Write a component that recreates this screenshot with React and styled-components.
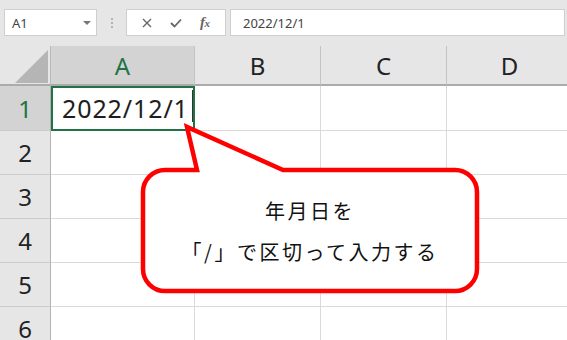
import React from "react";
import styled, { createGlobalStyle, css } from "styled-components";

const Global = createGlobalStyle`
  html, body { margin: 0; padding: 0; background: #ffffff; overflow: hidden; }
  * { box-sizing: border-box; }
`;

const Page = styled.div`
  position: relative;
  width: 567px;
  height: 340px;
  overflow: hidden;
  background: #ffffff;
  font-family: "Noto Sans", "Noto Sans CJK JP", sans-serif;
`;

const Toolbar = styled.div`
  display: flex;
  align-items: center;
  height: 46px;
  padding: 0 2px 1px 4px;
  background: #e6e6e6;
`;

const NameBox = styled.div`
  display: flex;
  align-items: center;
  justify-content: space-between;
  width: 93px;
  height: 27px;
  padding: 0 5px 0 7px;
  background: #ffffff;
  border: 1px solid #cfcfcf;
  font-size: 13px;
  color: #444;
`;

const Caret = styled.span`
  width: 0;
  height: 0;
  border-left: 4px solid transparent;
  border-right: 4px solid transparent;
  border-top: 4px solid #777;
`;

const Grip = styled.div`
  display: flex;
  flex-direction: column;
  align-items: center;
  justify-content: center;
  gap: 2px;
  width: 29px;
  height: 27px;
`;

const Dot = styled.span`
  width: 2px;
  height: 2px;
  background: #b3b3b3;
`;

const ButtonGroup = styled.div`
  display: flex;
  align-items: center;
  justify-content: space-around;
  width: 100px;
  height: 27px;
  padding: 0 6px;
  background: #ffffff;
  border: 1px solid #cfcfcf;
  color: #666;
`;

const IconButton = styled.span`
  display: flex;
  align-items: center;
  justify-content: center;
  width: 22px;
  height: 22px;
`;

const Fx = styled.span`
  font-family: "Liberation Serif", serif;
  font-style: italic;
  font-weight: bold;
  font-size: 15px;
  color: #666;
  letter-spacing: -0.5px;
  & > small { font-size: 11px; }
`;

const FormulaBox = styled.div`
  flex: 1;
  display: flex;
  align-items: center;
  height: 27px;
  margin-left: 4px;
  padding-left: 12px;
  background: #ffffff;
  border: 1px solid #cfcfcf;
  font-size: 13px;
  color: #444;
`;

const Sheet = styled.div`
  display: grid;
  grid-template-columns: 51px 144px 126px 126px 126px;
  grid-template-rows: 40px 45px repeat(5, 44px);
`;

const Corner = styled.div`
  position: relative;
  background: #e6e6e6;
  border-right: 1px solid #b9b9b9;
  border-bottom: 2px solid #ababab;
`;

const ColHeader = styled.div`
  display: flex;
  align-items: center;
  justify-content: center;
  padding-top: 1px;
  background: ${(p) => (p.$selected ? "#d3d3d3" : "#e6e6e6")};
  border-right: 1px solid #c4c4c4;
  border-bottom: 2px solid #ababab;
  font-size: 24px;
  color: ${(p) => (p.$selected ? "#217346" : "#222")};
`;

const RowHeader = styled.div`
  display: flex;
  align-items: center;
  justify-content: center;
  background: ${(p) => (p.$selected ? "#d3d3d3" : "#e6e6e6")};
  border-right: 1px solid #b3b3b3;
  border-bottom: 1px solid #cbcbcb;
  font-size: 24px;
  color: ${(p) => (p.$selected ? "#217346" : "#222")};
`;

const Cell = styled.div`
  display: flex;
  align-items: center;
  border-right: 1px solid #dadada;
  border-bottom: 1px solid #dadada;
  background: #ffffff;
  ${(p) =>
    p.$active &&
    css`
      padding-left: 11px;
      outline: 2px solid #217346;
      outline-offset: -2px;
      font-size: 25px;
      letter-spacing: 0.9px;
      color: #1e1e1e;
    `}
`;

const TextCursor = styled.span`
  width: 1px;
  height: 32px;
  margin-left: 3px;
  margin-top: -4px;
  background: #333;
`;

const CalloutLayer = styled.svg`
  position: absolute;
  left: 0;
  top: 0;
  width: 567px;
  height: 340px;
  pointer-events: none;
`;

const CalloutText = styled.div`
  position: absolute;
  left: 143px;
  top: 170px;
  width: 334px;
  height: 121px;
  display: flex;
  flex-direction: column;
  align-items: center;
  justify-content: center;
  font-family: "Noto Sans CJK JP", sans-serif;
  font-size: 20px;
  line-height: 41px;
  letter-spacing: 2.5px;
  color: #111;
`;

const Line = styled.div`
  white-space: nowrap;
`;

const columns = ["A", "B", "C", "D"];
const rows = [1, 2, 3, 4, 5, 6];

export default function App() {
  return (
    <Page>
      <Global />
      <Toolbar>
        <NameBox>
          <span>A1</span>
          <Caret />
        </NameBox>
        <Grip>
          <Dot />
          <Dot />
          <Dot />
        </Grip>
        <ButtonGroup>
          <IconButton>
            <svg width="10" height="10" viewBox="0 0 10 10">
              <path d="M1 1 L9 9 M9 1 L1 9" stroke="#666" strokeWidth="1.4" fill="none" />
            </svg>
          </IconButton>
          <IconButton>
            <svg width="12" height="10" viewBox="0 0 12 10">
              <path d="M1 5 L4.5 8.5 L11 1.5" stroke="#666" strokeWidth="1.8" fill="none" />
            </svg>
          </IconButton>
          <IconButton>
            <Fx>
              f<small>x</small>
            </Fx>
          </IconButton>
        </ButtonGroup>
        <FormulaBox>2022/12/1</FormulaBox>
      </Toolbar>
      <Sheet>
        <Corner>
          <svg width="51" height="38" viewBox="0 0 51 38" style={{ display: "block" }}>
            <polygon points="48,4 48,37 15,37" fill="#b5b5b5" />
          </svg>
        </Corner>
        {columns.map((c) => (
          <ColHeader key={c} $selected={c === "A"}>
            {c}
          </ColHeader>
        ))}
        {rows.map((r) => (
          <React.Fragment key={r}>
            <RowHeader $selected={r === 1}>{r}</RowHeader>
            {columns.map((c) =>
              r === 1 && c === "A" ? (
                <Cell key={c} $active>
                  2022/12/1
                  <TextCursor />
                </Cell>
              ) : (
                <Cell key={c} />
              )
            )}
          </React.Fragment>
        ))}
      </Sheet>
      <CalloutLayer viewBox="0 0 567 340">
        <path
          d="M197 170 L187 127 L283 170 L455 170 A22 22 0 0 1 477 192 L477 269 A22 22 0 0 1 455 291 L165 291 A22 22 0 0 1 143 269 L143 192 A22 22 0 0 1 165 170 Z"
          fill="#ffffff"
          stroke="#ff0000"
          strokeWidth="4.5"
          strokeLinejoin="miter"
          strokeMiterlimit="10"
        />
      </CalloutLayer>
      <CalloutText>
        <Line>年月日を</Line>
        <Line>「/」で区切って入力する</Line>
      </CalloutText>
    </Page>
  );
}
